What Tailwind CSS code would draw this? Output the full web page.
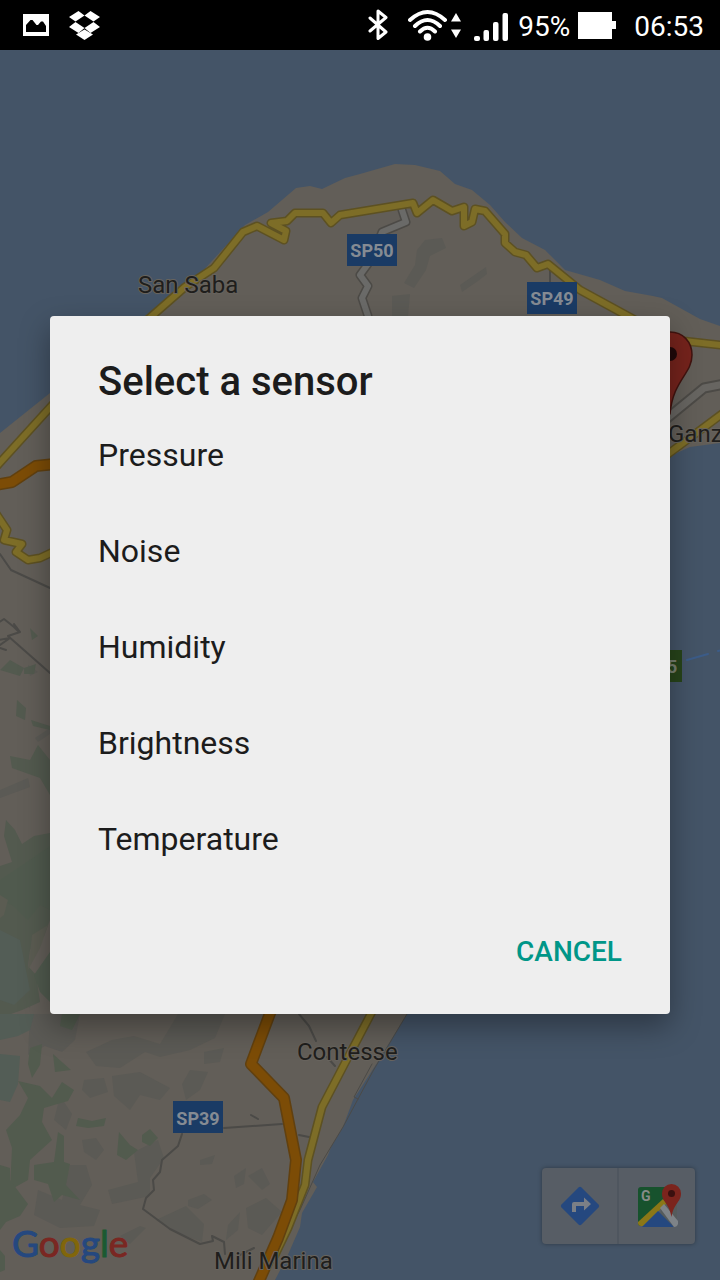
<!DOCTYPE html>
<html lang="en">
<head>
<meta charset="utf-8">
<meta name="viewport" content="width=device-width, initial-scale=1">
<title>Select a sensor</title>
<script src="https://cdn.jsdelivr.net/npm/@tailwindcss/browser@4"></script>
</head>
<body class="flex min-h-screen flex-col bg-black font-['Roboto',sans-serif]">

<!-- Status bar -->
<header class="flex h-[50px] shrink-0 items-center justify-between bg-black px-4 text-[28px] leading-8 text-white">
  <div class="flex items-center gap-5 pl-[7px]">
    <svg class="h-[22px] w-[26px]" viewBox="0 0 26 22" fill="none" aria-label="Screenshot saved" role="img">
      <path fill="#fff" fill-rule="evenodd" d="M0 0H26V22H0ZM3 18H23V12L20 7.500L18 7.500L15 11L13.500 11L9.500 6L7.500 6L3 11Z"/>
    </svg>
    <svg class="h-[29px] w-[31px]" viewBox="0 0 31 29" fill="#fff" aria-label="Dropbox" role="img">
      <path d="M9.500 0L15.500 4.500L6.500 10.500L0 6ZM21.500 0L31 6L24.500 10.500L15.500 4.500ZM0 16L6.500 11L15.500 17L9.500 22ZM31 16L24.500 11L15.500 17L21.500 22Z"/>
      <path d="M15.500 18.500L24 23.500L15.500 29L7 23.500Z"/>
    </svg>
  </div>
  <div class="flex items-center">
    <svg class="mr-5 h-8 w-5" viewBox="0 0 20 32" fill="none" stroke="#fff" stroke-width="3" stroke-linejoin="round" stroke-linecap="round" aria-label="Bluetooth" role="img">
      <path d="M2 9L18 23L10 29.500V2L18 8.500L2 22"/>
    </svg>
    <svg class="mr-3 h-8 w-[54px]" viewBox="0 0 54 32" fill="none" stroke="#fff" stroke-width="4" stroke-linecap="round" aria-label="Wi-Fi" role="img">
      <path d="M2 11Q19.500-5 37 11M7 17Q19.500 5 32 17M12 22.500Q19.500 15 27 22.500"/>
      <circle cx="19.500" cy="28" r="3.800" fill="#fff" stroke="none"/>
      <path fill="#fff" stroke="none" d="M48 4L53 12.500H43ZM43 20.500H53L48 29Z"/>
    </svg>
    <svg class="mr-2.5 h-8 w-[34px]" viewBox="0 0 34 32" fill="#fff" aria-label="Signal" role="img">
      <rect x="0" y="27" width="6" height="5" rx="2"/><rect x="9.500" y="21" width="5.500" height="11" rx="2"/><rect x="19" y="13" width="5.500" height="19" rx="2"/><rect x="28.500" y="4" width="5.500" height="28" rx="2"/>
    </svg>
    <span class="pt-1">95%</span>
    <svg class="ml-2 mr-[18px] h-[27px] w-[38px]" viewBox="0 0 38 27" fill="#fff" aria-label="Battery" role="img">
      <path d="M0 0H34V9H38V17H34V27H0Z"/>
    </svg>
    <span class="pt-1">06:53</span>
  </div>
</header>

<main class="relative flex flex-1 flex-col items-center justify-center overflow-hidden bg-[#445467] px-[50px]">

  <!-- Dimmed map -->
  <svg class="absolute inset-0 h-full w-full" viewBox="0 50 720 1230" preserveAspectRatio="xMidYMid slice" fill="none" stroke-linejoin="round" stroke-linecap="round" aria-label="Map" role="img">
    <rect y="50" width="720" height="1230" fill="#445467"/>
    <path fill="#625e58" d="M0 433L50 393L145 316L200 274L245 225L268 212L296 188L310 186L322 189L345 178L360 174L395 164L415 165L440 171L455 184L472 190L490 205L505 222L522 238L545 250L565 270L600 280L625 291L653 296L662 298L700 319L720 326V443L690 447L670 456L500 800L407 1014L377 1063L353 1100L343 1127L331 1147L328 1155L313 1182L317 1187L302 1213L300 1227L287 1257L275 1280H0Z"/>

    <!-- Relief -->
    <g fill="#5b5a55">
      <path d="M425 240L442 238L446 248L430 256L426 270L414 288L404 283L415 265L417 250ZM392 296L410 294L408 316H392ZM460 285L486 267L487 274L478 281L462 292Z"/>
      <path d="M0 790L28 778L30 787L0 798ZM35 738L50 728V734L38 742ZM28 665L38 672L30 676Z"/>
      <path d="M30 1014H80L75 1040L62 1052L45 1046L28 1055ZM86 1052L112 1040L134 1036L160 1044L178 1014H225L215 1038L190 1050L160 1057L145 1052L120 1068L96 1066ZM84 1080L104 1078L108 1092L90 1098L82 1090ZM112 1076L140 1072L170 1088L160 1100L140 1095L130 1110L114 1096ZM190 1070L208 1072L200 1090L186 1100L182 1084ZM204 1052L224 1048L220 1062L204 1064Z"/>
      <path d="M82 1140L96 1138L104 1150L96 1160L84 1152ZM70 1165H86L92 1185L80 1205L100 1210L94 1226L60 1228L34 1215L38 1190L62 1200ZM134 1152L158 1140L164 1158L150 1178L150 1196L112 1204L108 1190L138 1182ZM200 1160L215 1155L212 1164L200 1165ZM188 1200L204 1194L212 1200L198 1209L188 1206ZM156 1220L186 1206L204 1224L202 1242L175 1232ZM234 1176L246 1168L244 1184L236 1188ZM248 1176L262 1168L270 1184L262 1190ZM228 1225L240 1212L238 1230L226 1240ZM246 1208L266 1198L282 1212L262 1235L248 1228Z"/>
      <path d="M120 1236L140 1226L146 1228L130 1244ZM60 1096L72 1114L66 1130L54 1120ZM20 1000L32 990L30 1008Z"/>
    </g>
    <g fill="#535a4f">
      <path d="M17 700L26 708L25 720L16 716ZM31 720L50 726V730L33 726ZM10 756L30 760L38 745L50 760V795L40 778L12 768ZM0 670L10 660L24 668L20 676ZM30 628L38 636L32 640ZM24 668L36 664L34 674L24 674Z"/>
      <path d="M6 820L15 830L22 844L34 836L50 833V920L44 936L30 950L28 966L36 975L40 1002L22 1010L0 1018V905L6 890L0 885V866L12 862L4 836Z"/>
    </g>
    <path fill="#505a4e" d="M24 864L50 846V910L40 905L28 920L12 905L0 900V880ZM34 975L50 952V1002L40 992Z"/>
    <path fill="#5b5c52" d="M32 935L48 925L40 948L28 970ZM0 895L8 900L4 915L0 918Z"/>
    <path fill="#535d56" d="M0 1014L34 1014L30 1030L18 1036L0 1040ZM0 1054L20 1056L18 1084L10 1102L0 1100ZM0 930L20 940L30 990L14 1005L0 1000Z"/>
    <g fill="#525b4e">
      <path d="M30 1048L42 1044L40 1065L32 1078L28 1064ZM53 1054L71 1070L55 1072ZM18 1081L40 1086L52 1098L62 1082L74 1090L68 1101L54 1105L44 1108L42 1122L52 1140L30 1160L28 1180L10 1190L12 1148L6 1130L20 1115L28 1098ZM62 1014H80L72 1030L60 1026ZM76 1126L78 1118L92 1121L106 1118L104 1126L88 1128ZM119 1132L130 1145L138 1150L126 1160L117 1155ZM142 1135L150 1129L158 1138L150 1146L142 1142Z"/>
      <path d="M34 1165L54 1162L58 1132L64 1136L64 1162L70 1164L66 1185L80 1200L62 1195L54 1202L48 1184L34 1180ZM0 1165L10 1168L10 1180L28 1204L20 1216L6 1222L0 1230ZM0 1250L5 1256L5 1270L0 1272Z"/>
    </g>

    <!-- Minor roads and boundaries -->
    <g stroke="#4b4a47" stroke-width="2">
      <path d="M0 554L11 570L50 588M-2 623L4 619L14 627L18 631L14 624L20 632L8 636L50 673M-2 640L10 638L0 645M0 648L6 650"/>
      <path d="M224 1128L282 1124M299 1135L309 1137M182 1134L178 1146L162 1160L160 1172L153 1180L154 1190L146 1198L143 1209L170 1229L200 1244L213 1241L212 1236L224 1242L225 1254M299 1014L309 1026L316 1041M327 1057L335 1066M240 1255L254 1248M251 1115L258 1119M550 270L550 284"/>
      <path d="M407 1014L373 1071L343 1127L320 1165L300 1210L284 1238M372 1064L354 1097L358 1099" stroke-width="1"/>
    </g>
    <g>
      <path stroke="#4c4a46" stroke-width="9" d="M402 210L406 222L382 232L378 242L368 264L360 275L368 286L362 298L368 316"/>
      <path stroke="#6a6a68" stroke-width="6" d="M402 210L406 222L382 232L378 242L368 264L360 275L368 286L362 298L368 316"/>
      <path stroke="#4c4a46" stroke-width="11" d="M660 424L704 388L730 383"/>
      <path stroke="#676561" stroke-width="7" d="M660 424L704 388L730 383"/>
    </g>

    <!-- Yellow provincial roads -->
    <g stroke="#5d5122" stroke-width="9">
      <path d="M145 322L185 287L214 268L243 232L257 226L284 240L286 231L271 223L287 221L295 213L323 213L331 223L340 215L413 203L417 213L433 200L452 211L464 207L464 226L472 222L475 209L485 211L505 234L505 243L515 252L526 255L537 268L548 264L580 290L635 320M660 334L684 341L730 346M-5 468L55 402M-5 512L7 530L4 540L22 544L16 552L28 560L40 558L55 551M660 460L730 408"/>
      <path d="M374 1008L345 1063L322 1107L308 1160L305 1185L288 1228L275 1255"/>
    </g>
    <g stroke="#7d6d27" stroke-width="6">
      <path d="M145 322L185 287L214 268L243 232L257 226L284 240L286 231L271 223L287 221L295 213L323 213L331 223L340 215L413 203L417 213L433 200L452 211L464 207L464 226L472 222L475 209L485 211L505 234L505 243L515 252L526 255L537 268L548 264L580 290L635 320M660 334L684 341L730 346M-5 468L55 402M-5 512L7 530L4 540L22 544L16 552L28 560L40 558L55 551M660 460L730 408"/>
      <path d="M374 1008L345 1063L322 1107L308 1160L305 1185L288 1228L275 1255"/>
    </g>

    <!-- Orange motorway -->
    <path stroke="#61400f" stroke-width="12" d="M-5 485L12 482L36 466L55 464M272 1008L251 1064L284 1098L296 1160L292 1200L278 1238L256 1288"/>
    <path stroke="#7c4c06" stroke-width="9" d="M-5 485L12 482L36 466L55 464M272 1008L251 1064L284 1098L296 1160L292 1200L278 1238L256 1288"/>

    <path stroke="#3c5c88" stroke-width="2" d="M687 660L708 654M718 651L730 648"/>

    <!-- Pin -->
    <path fill="#75231c" stroke="#41130f" stroke-width="1.500" d="M670 332C683 332 692 342 692 355C692 374 673 380 670 414C667 380 648 374 648 355C648 342 657 332 670 332Z"/>
    <circle cx="670" cy="354" r="7" fill="#21090a"/>

    <!-- Road shields -->
    <g fill="#1a3b65">
      <rect x="347" y="234" width="50" height="32"/><rect x="527" y="282" width="50" height="32"/><rect x="173" y="1101" width="50" height="32"/>
    </g>
    <rect x="640" y="650" width="42" height="32" fill="#27441a"/>
    <g fill="#858b93" class="text-[18px] font-bold" text-anchor="middle">
      <text x="372" y="257">SP50</text><text x="552" y="305">SP49</text><text x="198" y="1125">SP39</text><text x="661" y="673" fill="#777f70">A25</text>
    </g>

    <!-- Place names -->
    <g fill="#1f1e1c" stroke="#67635d" stroke-width="2" paint-order="stroke" class="text-[24px]">
      <text x="138" y="293">San Saba</text><text x="297" y="1060">Contesse</text><text x="214" y="1269">Mili Marina</text><text x="668" y="442">Ganz</text>
    </g>
    <text x="12" y="1257" stroke-width="1" class="font-['Lato'] text-[37px]"><tspan fill="#25487f" stroke="#25487f">G</tspan><tspan fill="#7a2722" stroke="#7a2722">o</tspan><tspan fill="#81660b" stroke="#81660b">o</tspan><tspan fill="#25487f" stroke="#25487f">g</tspan><tspan fill="#1b5a31" stroke="#1b5a31">l</tspan><tspan fill="#7a2722" stroke="#7a2722">e</tspan></text>
  </svg>

  <!-- Map toolbar floating over the map -->
  <div class="absolute bottom-9 right-[25px] flex h-[76px] divide-x-2 divide-[#4f565f] rounded-sm bg-[#575d65] shadow-[0_0_4px_rgba(0,0,0,0.35)]">
    <button type="button" aria-label="Directions" class="flex w-[77px] items-center justify-center">
      <svg class="h-10 w-10" viewBox="0 0 40 40"><path fill="#25487f" d="M18.500 1.500Q20 0 21.500 1.500L38.500 18.500Q40 20 38.500 21.500L21.500 38.500Q20 40 18.500 38.500L1.500 21.500Q0 20 1.500 18.500Z"/><path fill="#7b7f86" d="M12 26V18Q12 16 14 16H24V11.500L31 18L24 24.500V20H16V26Z"/></svg>
    </button>
    <button type="button" aria-label="Open in Google Maps" class="flex w-[76px] items-center justify-center pl-1">
      <svg class="h-11 w-11" viewBox="0 0 44 44">
        <path fill="#17522d" d="M4 3H40V40L24 20L4 42Q1 42 1 39V6Q1 3 4 3Z"/>
        <path fill="#555b5c" d="M26 20L40 8V39Q40 42 37 42H20Z"/>
        <path fill="#8b7717" d="M1 38L26 15L30 19L6 42H4Q1 42 1 39Z"/>
        <path fill="#25487f" d="M5 43L21 27L37 43Z"/>
        <path fill="#7e8388" d="M23 24L27 20L41 37V40Q40 43 37 43Z"/>
        <path fill="#7b241d" d="M34.500 0A9.500 9.500 0 0 1 44 9.500C44 18 37 19 34.500 33C32 19 25 18 25 9.500A9.500 9.500 0 0 1 34.500 0Z"/>
        <circle cx="34.500" cy="9.500" r="3.500" fill="#3a100f"/>
        <text x="4" y="17" fill="#858c88" class="text-[14px] font-bold">G</text>
      </svg>
    </button>
  </div>

  <!-- Sensor dialog -->
  <section role="dialog" aria-modal="true" aria-labelledby="dialog-title" class="relative w-full rounded-[4px] bg-[#eeeeee] pt-10 text-[#1c1c1c] shadow-[0_12px_30px_0_rgba(0,0,0,0.35)]">
    <h1 id="dialog-title" class="px-12 text-[40px] font-medium leading-[51px]">Select a sensor</h1>
    <ul class="text-[32px]">
      <li><button type="button" class="h-24 w-full px-12 text-left">Pressure</button></li>
      <li><button type="button" class="h-24 w-full px-12 text-left">Noise</button></li>
      <li><button type="button" class="h-24 w-full px-12 text-left">Humidity</button></li>
      <li><button type="button" class="h-24 w-full px-12 text-left">Brightness</button></li>
      <li><button type="button" class="h-24 w-full px-12 text-left">Temperature</button></li>
    </ul>
    <div class="flex justify-end px-8 pb-[27px] pt-[30px]">
      <button type="button" class="h-[70px] px-4 text-[28px] font-medium text-[#009688]">CANCEL</button>
    </div>
  </section>
</main>
</body>
</html>
